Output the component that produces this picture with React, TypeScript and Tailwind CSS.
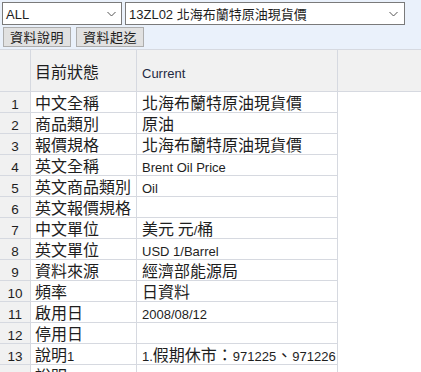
import React from "react";

const CJK = /([\u2E80-\u9FFF\u3000-\u303F\uFF00-\uFFEF]+)/;

function Mixed({ text, cjk = "text-[16px]", latin = "text-[13px]" }: { text: string; cjk?: string; latin?: string }) {
  const parts = text.split(CJK).filter((p) => p.length > 0);
  return (
    <span
      className={"whitespace-pre inline-block leading-[18px] h-[18px] " + cjk}
      style={{ fontFamily: '"Noto Sans CJK TC", sans-serif' }}
    >
      {parts.map((p, i) =>
        CJK.test(p) ? (
          <span key={i}>{p}</span>
        ) : (
          <span key={i} className={latin} style={{ fontFamily: '"Liberation Sans", Arial, sans-serif' }}>
            {p}
          </span>
        )
      )}
    </span>
  );
}

function Chevron() {
  return (
    <svg width="9" height="6" viewBox="0 0 9 6" className="shrink-0">
      <polyline points="0.5,1 4.5,5 8.5,1" fill="none" stroke="#555" strokeWidth="1" />
    </svg>
  );
}

const rows: [string, string][] = [
  ["中文全稱", "北海布蘭特原油現貨價"],
  ["商品類別", "原油"],
  ["報價規格", "北海布蘭特原油現貨價"],
  ["英文全稱", "Brent Oil Price"],
  ["英文商品類別", "Oil"],
  ["英文報價規格", ""],
  ["中文單位", "美元 元/桶"],
  ["英文單位", "USD 1/Barrel"],
  ["資料來源", "經濟部能源局"],
  ["頻率", "日資料"],
  ["啟用日", "2008/08/12"],
  ["停用日", ""],
  ["說明1", "1.假期休市：971225、971226"],
  ["說明2", ""],
];

export default function App() {
  return (
    <div className="w-[421px] h-[372px] overflow-hidden bg-white text-[#1e1e1e]">
      <div className="bg-[#eaf1fb] h-[49px] flex flex-col">
        <div className="flex gap-[3px] pl-[2px] pt-[2px]">
          <div className="w-[120px] h-[23px] bg-white border border-[#7a7a7a] flex items-center justify-between pl-[3px] pr-[5px]">
            <Mixed text="ALL" cjk="text-[13px]" />
            <Chevron />
          </div>
          <div className="w-[280px] h-[23px] bg-white border border-[#7a7a7a] flex items-center justify-between pl-[3px] pr-[6px]">
            <Mixed text="13ZL02 北海布蘭特原油現貨價" cjk="text-[13px]" />
            <Chevron />
          </div>
        </div>
        <div className="flex gap-[5px] pl-[3px] pt-[2px]">
          <div className="w-[68px] h-[20px] bg-[#e1e1e1] border border-[#adadad] flex items-center justify-center">
            <Mixed text="資料說明" cjk="text-[13px] tracking-[0.5px]" />
          </div>
          <div className="w-[68px] h-[20px] bg-[#e1e1e1] border border-[#adadad] flex items-center justify-center">
            <Mixed text="資料起迄" cjk="text-[13px] tracking-[0.5px]" />
          </div>
        </div>
      </div>
      <div className="border-t border-[#d6d9e0]">
        <div className="grid grid-cols-[31px_106px_201px_1fr] h-[42px] bg-[#f1f1f1]">
          <div className="border-r border-b border-[#d6d9e0]" />
          <div className="border-r border-b border-[#d6d9e0] flex items-center pl-[4px]">
            <Mixed text="目前狀態" />
          </div>
          <div className="border-r border-b border-[#d6d9e0] flex items-center pl-[5px] text-[#1f2a44]">
            <Mixed text="Current" />
          </div>
          <div className="border-b border-[#d6d9e0]" />
        </div>
        {rows.map(([label, value], i) => (
          <div key={i} className="grid grid-cols-[31px_106px_201px_1fr] h-[21px]">
            <div className="bg-[#f1f1f1] border-r border-b border-[#d6d9e0] flex items-center justify-center">
              <Mixed text={String(i + 1)} latin="text-[13.5px]" />
            </div>
            <div className="border-r border-b border-[#d6d9e0] flex items-center pl-[4px]">
              <Mixed text={label} />
            </div>
            <div className="border-r border-b border-[#d6d9e0] flex items-center pl-[5px]">
              <Mixed text={value} />
            </div>
            <div />
          </div>
        ))}
      </div>
    </div>
  );
}
